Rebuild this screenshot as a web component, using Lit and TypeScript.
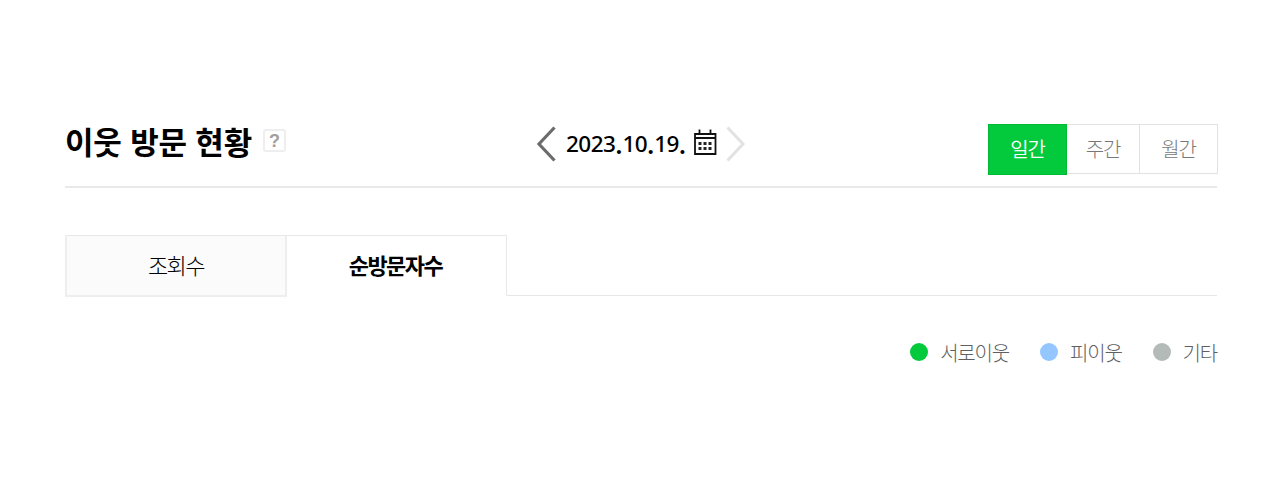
import { LitElement, html, css } from "lit";
import { customElement, state } from "lit/decorators.js";

@customElement("app-root")
export class AppRoot extends LitElement {
  @state() private period = "일간";
  @state() private tab = "순방문자수";

  static styles = css`
    :host { display: block; height: 482px; background: #fff; box-sizing: border-box; padding: 124px 63px 0 65px;
      font-family: "Noto Sans CJK KR", "Noto Sans", sans-serif; color: #000; overflow: hidden; }
    .header { display: grid; grid-template-columns: 471px 1fr auto; height: 62px; border-bottom: 2px solid #e9e9e9; }
    .title { display: flex; height: 36px; align-items: center; }
    h1 { margin: -2px 0 0; font-size: 31px; line-height: 36px; font-weight: 700; letter-spacing: -0.2px; word-spacing: 1.7px; white-space: nowrap; }
    .help { box-sizing: border-box; width: 23px; height: 23px; margin: -3px 0 0 11px; border: 2px solid #eee; border-radius: 3px;
      font: 700 18px/20px "Liberation Sans", sans-serif; color: #a0a0a0; text-align: center; }
    .date { display: flex; height: 40px; align-items: center; }
    .value { width: 120px; margin-left: 10px; font: 550 22.5px/30px "Noto Sans", sans-serif; letter-spacing: -0.55px; white-space: nowrap; }
    .point { display: inline-block; width: 7.2px; text-align: center; font-weight: 700; line-height: 20px; vertical-align: -2px; letter-spacing: 0; }
    .cal { margin: -3px 0 0 7px; }
    .next { margin-left: 9px; }
    svg { display: block; flex: none; }
    .periods { display: flex; align-items: flex-start; margin-right: -1px; }
    .period { box-sizing: border-box; height: 50px; border: 1px solid #e2e2e2; border-left: 0; font-size: 20px; line-height: 48px;
      letter-spacing: -1.2px; text-align: center; color: #777; font-weight: 300; width: 78px; }
    .period.mid { width: 73px; }
    .period.on { width: 79px; height: 51px; background: #03c93c; border: 1px solid #02b936; color: #fff; font-weight: 350; }
    .tabs { display: flex; height: 62px; margin-top: 47px; align-items: flex-start; }
    .tab { box-sizing: border-box; width: 220px; height: 61px; border: 1px solid #e8e8e8; border-bottom-color: transparent; border-left: 0;
      padding-right: 2px; text-align: center; font-size: 22px; line-height: 57px; letter-spacing: -1.5px; font-weight: 700; }
    .tab.off { width: 222px; height: 62px; padding-right: 0; border: 2px solid #eee; border-top: 1px solid #e8e8e8; background: #fbfbfb; font-weight: 300; line-height: 56px; }
    .rest { flex: 1; height: 61px; box-sizing: border-box; border-bottom: 1px solid #e6e6e6; }
    .legend { display: flex; justify-content: flex-end; margin-top: 41px; height: 30px; align-items: center; color: #606060;
      font-size: 20px; line-height: 30px; font-weight: 300; letter-spacing: -1.2px; }
    .item { display: flex; align-items: center; margin-left: 31px; }
    .dot { width: 18px; height: 18px; border-radius: 50%; margin: -2px 12px 0 0; }
    .green { background: #03c93c; } .blue { background: #94c6ff; } .gray { background: #b3bab7; }
  `;

  render() {
    const periods = ["일간", "주간", "월간"];
    const tabs = ["조회수", "순방문자수"];
    const legend = [["green", "서로이웃"], ["blue", "피이웃"], ["gray", "기타"]];
    const point = html`<span class="point">.</span>`;
    return html`
      <div class="header">
        <div class="title"><h1>이웃 방문 현황</h1><span class="help">?</span></div>
        <div class="date">
          <svg width="20" height="36" viewBox="0 0 20 36"><path d="M18.5 1.5 3 18l15.500 16.500" fill="none" stroke="#6c6c6c" stroke-width="3.2"/></svg>
          <span class="value">2023${point}10${point}19${point}</span>
          <svg class="cal" width="24" height="27" viewBox="0 0 24 27">
            <path d="M2 5h20.500v20H2zM2 9h20.500M6.500 .5v4.500M17.500 .5v4.500" fill="none" stroke="#111" stroke-width="1.8"/>
            <path d="M5.500 13h3v3h-3zM10.500 13h3v3h-3zM15.500 13h3v3h-3zM5.500 18h3v3h-3zM10.500 18h3v3h-3zM15.500 18h3v3h-3z" fill="#222"/>
          </svg>
          <svg class="next" width="20" height="36" viewBox="0 0 20 36"><path d="M1.500 1.500 17 18l-15.500 16.500" fill="none" stroke="#e2e2e2" stroke-width="3"/></svg>
        </div>
        <div class="periods">
          ${periods.map((p, i) => html`<div class="period ${i === 1 ? "mid" : ""} ${p === this.period ? "on" : ""}" @click=${() => (this.period = p)}>${p}</div>`)}
        </div>
      </div>
      <div class="tabs">
        ${tabs.map((t) => html`<div class="tab ${t === this.tab ? "" : "off"}" @click=${() => (this.tab = t)}>${t}</div>`)}
        <div class="rest"></div>
      </div>
      <div class="legend">
        ${legend.map(([c, t]) => html`<div class="item"><span class="dot ${c}"></span><span>${t}</span></div>`)}
      </div>
    `;
  }
}
